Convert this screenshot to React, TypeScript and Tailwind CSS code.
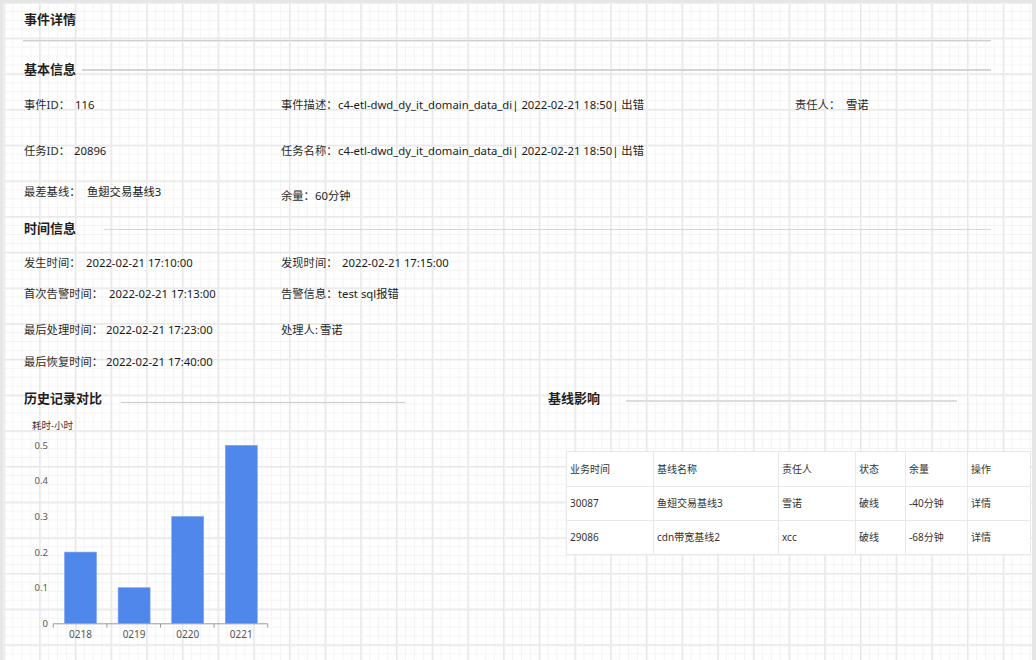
import React from "react";

const font = "font-['Noto_Sans','Noto_Sans_CJK_SC',sans-serif]";

const Field = ({ label, value, w }: { label: string; value: string; w: string }) => (
  <div className="flex items-center whitespace-nowrap">
    <span className={`inline-block ${w} text-[#2b2b2b]`}>{label}</span>
    <span className="text-[#1a1a1a]">{value}</span>
  </div>
);

const bars = [
  { label: "0218", value: 0.2 },
  { label: "0219", value: 0.1 },
  { label: "0220", value: 0.3 },
  { label: "0221", value: 0.5 },
];

const HistoryChart = () => {
  const base = 210.3;
  const unit = 356; // px per 1.0
  return (
    <svg width="260" height="247" className="block">
      <text x="8" y="16" fontSize="9.5" fill="#333">耗时-小时</text>
      {[0.5, 0.4, 0.3, 0.2, 0.1, 0].map((v) => (
        <text key={v} x="24" y={base - v * unit + 3.5} fontSize="9.5" fill="#555" textAnchor="end">
          {v === 0 ? "0" : v.toFixed(1)}
        </text>
      ))}
      {bars.map((b, i) => {
        const x = 40.5 + i * 53.6;
        const h = b.value * unit;
        return (
          <g key={b.label}>
            <rect x={x} y={base - h} width="32" height={h} fill="#4f87ea" stroke="#7aa6f0" strokeWidth="0.6" />
            <text x={x + 16} y="224.5" fontSize="10" fill="#555" textAnchor="middle">
              {b.label}
            </text>
          </g>
        );
      })}
      <line x1="29.3" y1="210.8" x2="243.7" y2="210.8" stroke="#9a9a9a" strokeWidth="1" />
      {[0, 1, 2, 3, 4].map((i) => (
        <line key={i} x1={29.3 + i * 53.6} y1="210.8" x2={29.3 + i * 53.6} y2="214.5" stroke="#9a9a9a" strokeWidth="1" />
      ))}
    </svg>
  );
};

const rows = [
  ["30087", "鱼翅交易基线3", "雪诺", "破线", "-40分钟", "详情"],
  ["29086", "cdn带宽基线2", "xcc", "破线", "-68分钟", "详情"],
];
const headers = ["业务时间", "基线名称", "责任人", "状态", "余量", "操作"];
const colW = ["w-[87px]", "w-[125px]", "w-[77px]", "w-[50px]", "w-[62px]", "w-[63px]"];

export default function App() {
  return (
    <div
      className={`${font} w-[1036px] h-[660px] overflow-hidden border-l-[3px] border-t-[2px] border-r-[4px] border-[#e6e6e6] bg-white text-[11.3px]
      bg-[linear-gradient(to_right,#e7e7e7_0,#e7e7e7_1px,#f1f1f1_1px,#f1f1f1_2px,transparent_2px),linear-gradient(to_bottom,#e7e7e7_0,#e7e7e7_1px,#f1f1f1_1px,#f1f1f1_2px,transparent_2px),linear-gradient(to_right,#f4f4f4_1px,transparent_1px),linear-gradient(to_bottom,#f4f4f4_1px,transparent_1px)]
      bg-[size:35.7px_35.7px,35.7px_35.7px,8.925px_8.925px,8.925px_8.925px]
      bg-[position:0.5px_0px,0px_0px,0.5px_0px,0px_0px]`}
    >
      <div className="pl-[21px] flex flex-col">
        {/* 标题 */}
        <div className="h-[35px] flex items-center text-[13px] font-bold text-[#1f1f1f]">事件详情</div>
        <div className="mt-[3px] -ml-[1px] w-[968px]">
          <div className="h-px bg-[#cfcfcf]" />
          <div className="h-px bg-[#ebebeb]" />
        </div>

        {/* 基本信息 */}
        <div className="mt-[14px] h-[27px] w-[967px] flex items-center">
          <span className="text-[13px] font-bold text-[#1f1f1f]">基本信息</span>
          <div className="ml-[6px] flex-1 h-[2px] bg-[#d4d4d4]" />
        </div>
        <div className="mt-[8px] h-[28px] grid grid-cols-[257px_514px_1fr] items-center">
          <Field label="事件ID：" value="116" w="w-[51px]" />
          <Field label="事件描述：" value="c4-etl-dwd_dy_it_domain_data_di| 2022-02-21 18:50| 出错" w="w-[57px]" />
          <Field label="责任人：" value="雪诺" w="w-[51px]" />
        </div>
        <div className="mt-[18px] h-[28px] grid grid-cols-[257px_514px_1fr] items-center">
          <Field label="任务ID：" value="20896" w="w-[50px]" />
          <Field label="任务名称：" value="c4-etl-dwd_dy_it_domain_data_di| 2022-02-21 18:50| 出错" w="w-[57px]" />
        </div>
        <div className="mt-[13px] h-[28px] grid grid-cols-[257px_514px_1fr] items-center">
          <Field label="最差基线：" value="鱼翅交易基线3" w="w-[63px]" />
          <div className="pt-[8px]">
            <Field label="余量：" value="60分钟" w="w-[34px]" />
          </div>
        </div>

        {/* 时间信息 */}
        <div className="mt-[9px] h-[28px] w-[967px] flex items-center">
          <span className="text-[13px] font-bold text-[#1f1f1f]">时间信息</span>
          <div className="ml-[28px] flex-1 h-px bg-[#d6d6d6]" />
        </div>
        <div className="mt-[6px] h-[28px] grid grid-cols-[257px_1fr] items-center">
          <Field label="发生时间：" value="2022-02-21 17:10:00" w="w-[62px]" />
          <Field label="发现时间：" value="2022-02-21 17:15:00" w="w-[61px]" />
        </div>
        <div className="mt-[3px] h-[28px] grid grid-cols-[257px_1fr] items-center">
          <Field label="首次告警时间：" value="2022-02-21 17:13:00" w="w-[85px]" />
          <Field label="告警信息：" value="test sql报错" w="w-[57px]" />
        </div>
        <div className="mt-[8px] h-[28px] grid grid-cols-[257px_1fr] items-center">
          <Field label="最后处理时间：" value="2022-02-21 17:23:00" w="w-[82px]" />
          <Field label="处理人:" value="雪诺" w="w-[39px]" />
        </div>
        <div className="mt-[4px] h-[28px] grid grid-cols-[257px_1fr] items-center">
          <Field label="最后恢复时间：" value="2022-02-21 17:40:00" w="w-[82px]" />
        </div>

        {/* 历史记录对比 / 基线影响 */}
        <div className="mt-[9px] flex">
          <div className="w-[524px] flex flex-col">
            <div className="h-[28px] flex items-center">
              <span className="text-[13px] font-bold text-[#1f1f1f]">历史记录对比</span>
              <div className="ml-[19px] mt-[7px] w-[284px] h-px bg-[#cccccc]" />
            </div>
            <HistoryChart />
          </div>
          <div className="flex flex-col">
            <div className="h-[28px] flex items-center">
              <span className="text-[13px] font-bold text-[#1f1f1f]">基线影响</span>
              <div className="ml-[26px] mt-[4px] w-[331px] h-[2px] bg-[#dddddd]" />
            </div>
            <table className="ml-[18px] mt-[38px] w-[464px] table-fixed border-collapse bg-white text-[10px] text-[#333]">
              <thead>
                <tr className="h-[35px]">
                  {headers.map((h, i) => (
                    <th key={h} className={`${colW[i]} border border-[#e8e8e8] pl-[3px] text-left font-normal`}>
                      {h}
                    </th>
                  ))}
                </tr>
              </thead>
              <tbody>
                {rows.map((r) => (
                  <tr key={r[0]} className="h-[34px]">
                    {r.map((c, i) => (
                      <td key={i} className="border border-[#e8e8e8] pl-[3px]">
                        {c}
                      </td>
                    ))}
                  </tr>
                ))}
              </tbody>
            </table>
          </div>
        </div>
      </div>
    </div>
  );
}
